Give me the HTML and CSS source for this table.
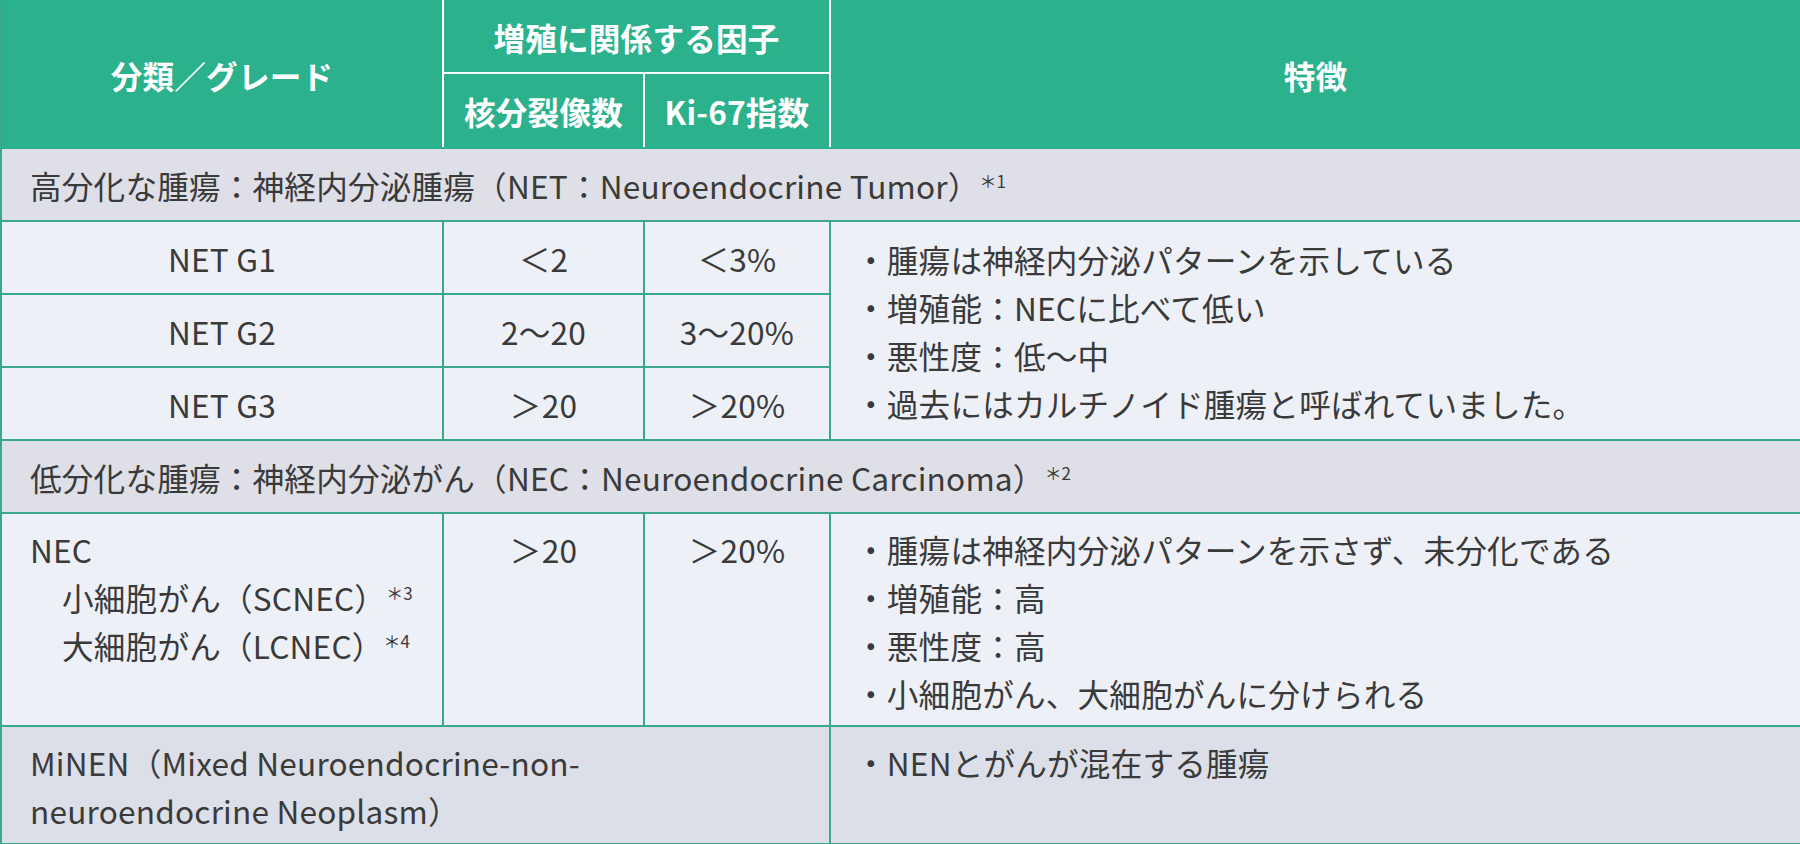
FILE: index.html
```html
<!DOCTYPE html>
<html lang="ja">
<head>
<meta charset="utf-8">
<title>神経内分泌腫瘍の分類</title>
<link rel="stylesheet" href="styles.css">
</head>
<body>
<table class="net-table">
  <colgroup>
    <col class="c1"><col class="c2"><col class="c3"><col class="c4">
  </colgroup>
  <thead>
    <tr class="hr1">
      <th rowspan="2" class="th-first">分類／グレード</th>
      <th colspan="2">増殖に関係する因子</th>
      <th rowspan="2" class="th-last">特徴</th>
    </tr>
    <tr class="hr2">
      <th>核分裂像数</th>
      <th>Ki-67指数</th>
    </tr>
  </thead>
  <tbody>
    <tr class="sec">
      <td colspan="4">高分化な腫瘍：神経内分泌腫瘍（NET：Neuroendocrine Tumor）<span class="note">＊1</span></td>
    </tr>
    <tr class="row">
      <td class="ctr">NET G1</td>
      <td class="ctr">＜2</td>
      <td class="ctr">＜3%</td>
      <td rowspan="3" class="desc">
        <ul class="bullets">
          <li>・腫瘍は神経内分泌パターンを示している</li>
          <li>・増殖能：NECに比べて低い</li>
          <li>・悪性度：低〜中</li>
          <li>・過去にはカルチノイド腫瘍と呼ばれていました。</li>
        </ul>
      </td>
    </tr>
    <tr class="row">
      <td class="ctr">NET G2</td>
      <td class="ctr">2〜20</td>
      <td class="ctr">3〜20%</td>
    </tr>
    <tr class="row">
      <td class="ctr">NET G3</td>
      <td class="ctr">＞20</td>
      <td class="ctr">＞20%</td>
    </tr>
    <tr class="sec">
      <td colspan="4">低分化な腫瘍：神経内分泌がん（NEC：Neuroendocrine Carcinoma）<span class="note">＊2</span></td>
    </tr>
    <tr class="nec">
      <td class="top lft">
        <div>NEC</div>
        <div class="sub">小細胞がん（SCNEC）<span class="note">＊3</span></div>
        <div class="sub">大細胞がん（LCNEC）<span class="note">＊4</span></div>
      </td>
      <td class="top ctr">＞20</td>
      <td class="top ctr">＞20%</td>
      <td class="top desc">
        <ul class="bullets">
          <li>・腫瘍は神経内分泌パターンを示さず、未分化である</li>
          <li>・増殖能：高</li>
          <li>・悪性度：高</li>
          <li>・小細胞がん、大細胞がんに分けられる</li>
        </ul>
      </td>
    </tr>
    <tr class="minen">
      <td colspan="3" class="top lft">MiNEN（Mixed Neuroendocrine-non-<br>neuroendocrine Neoplasm）</td>
      <td class="top desc">
        <ul class="bullets">
          <li>・NENとがんが混在する腫瘍</li>
        </ul>
      </td>
    </tr>
  </tbody>
</table>
</body>
</html>
```

FILE: styles.css
```css
html, body {
  margin: 0;
  padding: 0;
  background: #ffffff;
}

body {
  font-family: "Noto Sans CJK JP", "Noto Sans", sans-serif;
  color: #3a3a3a;
}

.net-table {
  width: 1800px;
  border-collapse: collapse;
  table-layout: fixed;
  font-size: 31.6px;
  letter-spacing: 0.2px;
  line-height: 48px;
}

.c1 { width: 442px; }
.c2 { width: 201px; }
.c3 { width: 186px; }
.c4 { width: 971px; }

th {
  background: #2bb28d;
  color: #ffffff;
  font-weight: 700;
  border: 2px solid #ffffff;
  padding: 0;
  text-align: center;
  vertical-align: middle;
}

.hr1 th { border-top-color: #2bb28d; }
.hr2 th { border-bottom-color: #2bb28d; }
.th-first { border-left-color: #3aa98a; border-bottom-color: #2bb28d; }
.th-last { border-right-color: #3aa98a; border-bottom-color: #2bb28d; }

.hr1 { height: 72px; }
.hr2 { height: 75px; }

td {
  border: 2px solid #3aa98a;
  padding: 0;
  vertical-align: middle;
}

.sec { height: 73px; }
.sec td {
  background: #dedfe7;
  padding: 0 28px;
}

.row { height: 73px; }
.row td, .nec td {
  background: #edf0f7;
}

.nec { height: 213px; }
.minen { height: 118px; }
.minen td {
  background: #dcdfe7;
}

.ctr { text-align: center; }
.top { vertical-align: top; padding-top: 11px; }
.lft { padding-left: 28px; }
.minen .top { padding-top: 11px; }

.sub { padding-left: 32px; }

.desc { padding-left: 24px; }

.bullets {
  list-style: none;
  margin: 0;
  padding: 0;
}

.note {
  font-size: 17px;
  line-height: 1;
  letter-spacing: 0;
  vertical-align: 11px;
}
```
